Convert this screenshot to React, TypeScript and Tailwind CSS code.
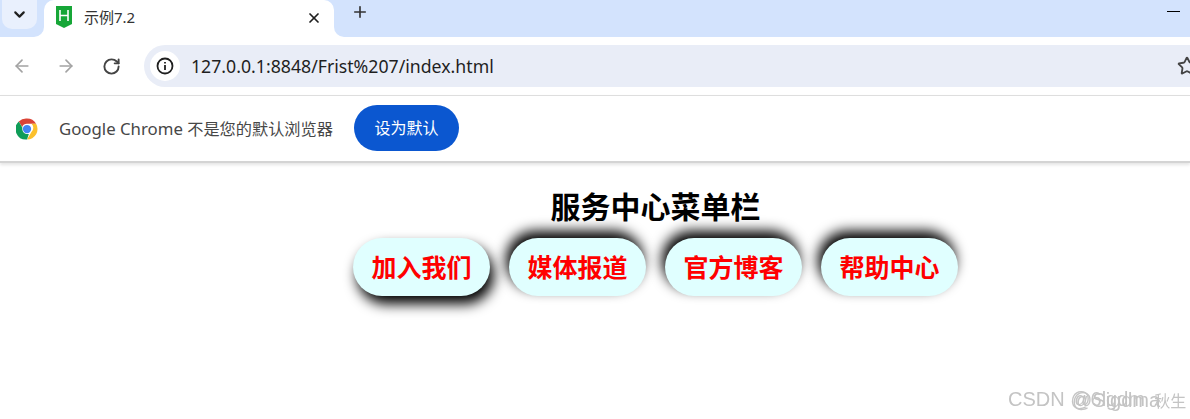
import { ArrowLeft, ArrowRight, ChevronDown, Plus, RotateCw, Star, X } from "lucide-react";

const ui = { fontFamily: '"Noto Sans", "Noto Sans CJK SC", sans-serif' };
const cjk = { fontFamily: '"Noto Sans CJK SC", sans-serif' };
const mark = { fontFamily: '"Liberation Sans", "Noto Sans CJK SC", sans-serif' };

function ChromeLogo() {
  return (
    <svg width="22" height="22" viewBox="0 0 48 48">
      <circle cx="24" cy="24" r="23" fill="#fff" />
      <path d="M24 1a23 23 0 0 1 19.9 11.5H24a11.5 11.5 0 0 0-10.6 7L6 7.5A23 23 0 0 1 24 1z" fill="#db4437" />
      <path d="M43.9 12.5A23 23 0 0 1 24 47l10-17.2a11.5 11.5 0 0 0-.4-17.3z" fill="#fbc02d" />
      <path d="M24 47A23 23 0 0 1 6 7.5l8 13.8a11.5 11.5 0 0 0 14 13.5z" fill="#0f9d58" />
      <circle cx="24" cy="24" r="9" fill="#4285f4" />
    </svg>
  );
}

function HBuilderIcon() {
  return (
    <svg width="16" height="22" viewBox="0 0 16 22">
      <path d="M0 0h16v18l-8 4-8-4z" fill="#16a637" />
      <path d="M4 4v11M12 4v11M4 9.5h8" stroke="#fff" strokeWidth="1.6" fill="none" />
    </svg>
  );
}

function InfoIcon() {
  return (
    <svg width="18" height="18" viewBox="0 0 18 18" fill="none">
      <circle cx="9" cy="9" r="7.5" stroke="#1f1f1f" strokeWidth="1.8" />
      <path d="M9 8v5M9 5v1.6" stroke="#1f1f1f" strokeWidth="1.8" />
    </svg>
  );
}

const items = [
  { label: "加入我们", shadow: "shadow-[4px_8px_13px_#000]" },
  { label: "媒体报道", shadow: "shadow-[-3px_-7px_13px_#000]" },
  { label: "官方博客", shadow: "shadow-[-3px_-7px_13px_#000]" },
  { label: "帮助中心", shadow: "shadow-[-3px_-7px_13px_#000]" },
];

export default function App() {
  return (
    <div className="w-[1190px] h-[419px] overflow-hidden bg-white relative flex flex-col" style={ui}>
      <div className="h-[37px] bg-[#d3e3fd] flex items-start shrink-0">
        <div className="w-[44px] h-[37px] pl-[2px]">
          <div className="w-[35px] h-[29px] rounded-b-[10px] bg-[#e9f0fd] flex items-center justify-center">
            <ChevronDown size={17} strokeWidth={3} className="text-[#1f1f1f]" />
          </div>
        </div>
        <div className="relative w-[290px] h-[37px] bg-white rounded-t-[10px] flex items-center pl-[12px] pr-[12px]">
          <span className="absolute -left-[10px] bottom-0 w-[10px] h-[10px] bg-white"><span className="block w-full h-full bg-[#d3e3fd] rounded-br-[10px]" /></span>
          <span className="absolute -right-[10px] bottom-0 w-[10px] h-[10px] bg-white"><span className="block w-full h-full bg-[#d3e3fd] rounded-bl-[10px]" /></span>
          <div className="-mt-[4px]"><HBuilderIcon /></div>
          <span className="ml-[12px] text-[15px] text-[#333] -mt-[2px]">示例7.2</span>
          <X size={16} strokeWidth={2.6} className="ml-auto text-[#1f1f1f] -mt-[2px]" />
        </div>
        <Plus size={18} strokeWidth={2.2} className="ml-[17px] mt-[3px] text-[#333]" />
        <div className="ml-auto mr-[10px] mt-[11px] w-[13px] h-[1px] bg-black" />
      </div>

      <div className="h-[58px] bg-white flex items-center shrink-0 pl-[12px]">
        <ArrowLeft size={20} strokeWidth={2} className="text-[#a3a3a3]" />
        <ArrowRight size={20} strokeWidth={2} className="ml-[24px] text-[#a3a3a3]" />
        <RotateCw size={19} strokeWidth={2.4} className="ml-[26px] text-[#444]" />
        <div className="ml-[23px] h-[42px] flex-1 bg-[#e9edf7] rounded-l-[21px] flex items-center pl-[6px] overflow-hidden">
          <div className="w-[30px] h-[30px] rounded-full bg-white flex items-center justify-center"><InfoIcon /></div>
          <span className="ml-[11px] text-[17.7px] text-[#1f1f1f]">127.0.0.1:8848/Frist%207/index.html</span>
          <Star size={20} strokeWidth={2.2} className="ml-auto -mr-[7px] text-[#444] shrink-0" />
        </div>
      </div>

      <div className="h-[68px] shrink-0 bg-white border-t border-[#dedede] border-b-2 border-b-[#d4d4d4] shadow-[0_2px_3px_#e5e5e5] flex items-center pl-[16px]">
        <ChromeLogo />
        <span className="ml-[21px] text-[16.8px] text-[#474747] whitespace-nowrap">Google Chrome <span className="text-[16.2px]">不是您的默认浏览器</span></span>
        <button className="ml-[21px] -mt-[2px] w-[105px] h-[46px] rounded-full bg-[#0b57d0] text-white text-[16px]">设为默认</button>
      </div>

      <main className="pl-[121px] pt-[22px] flex flex-col items-center" style={cjk}>
        <h1 className="text-[30px] leading-[40px] font-bold text-black">服务中心菜单栏</h1>
        <nav className="mt-[13px] flex gap-[19px]">
          {items.map((it) => (
            <a key={it.label} className={`w-[137px] h-[58px] rounded-[29px] bg-[#e0ffff] text-[#ff0000] text-[25px] font-bold flex items-center justify-center ${it.shadow}`}>
              {it.label}
            </a>
          ))}
        </nav>
      </main>

      <div className="absolute left-[1008px] top-[386px] text-[20px] leading-[26px] text-[#c4c4c4] whitespace-nowrap blur-[0.5px]" style={mark}>CSDN @6lgdm</div>
      <div className="absolute left-[1072px] top-[387px] text-[20px] leading-[26px] text-[#c4c4c4] whitespace-nowrap blur-[0.5px]" style={mark}>@Sigdma<span className="-ml-[6px] text-[16px]">秋生</span></div>
    </div>
  );
}
